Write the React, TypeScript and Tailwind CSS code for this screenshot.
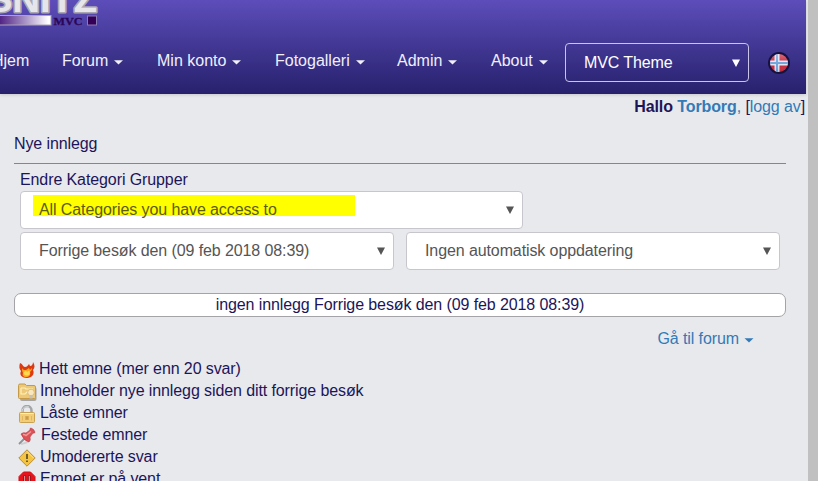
import React from "react";

function Caret({ className = "" }: { className?: string }) {
  return (
    <svg className={className} width="9" height="5" viewBox="0 0 9 5" fill="currentColor">
      <path d="M0 0.3h9L4.5 4.6z" />
    </svg>
  );
}

function Logo() {
  return (
    <svg className="block" width="104" height="30" viewBox="0 0 104 30">
      <defs>
        <linearGradient id="silver" x1="0" y1="0" x2="0" y2="1">
          <stop offset="0" stopColor="#d8d8dc" />
          <stop offset="0.6" stopColor="#f0f0f0" />
          <stop offset="1" stopColor="#c4c4c8" />
        </linearGradient>
        <linearGradient id="bar" x1="0" x2="1">
          <stop offset="0" stopColor="#4b1a80" />
          <stop offset="0.5" stopColor="#a58fc4" />
          <stop offset="0.95" stopColor="#ffffff" />
        </linearGradient>
      </defs>
      <g fontFamily="Liberation Sans, sans-serif" fontWeight="700" fontSize="36" stroke="#a9a6b4" strokeWidth="3.2" strokeLinejoin="round" fill="#e6e6ea" style={{ paintOrder: "stroke" }}>
        <text x="-13" y="11.500" textLength="110" lengthAdjust="spacingAndGlyphs">SNITZ</text>
      </g>
      <rect x="-2" y="15.5" width="53" height="9.5" fill="url(#bar)" stroke="#aaa4b8" />
      <text x="53.500" y="24.5" fontFamily="Liberation Serif, serif" fontWeight="700" fontSize="11" textLength="29" lengthAdjust="spacingAndGlyphs" fill="#2b0759" stroke="#2b0759" strokeWidth="0.3">MVC</text>
      <rect x="87.5" y="16" width="9" height="9" fill="#330055" stroke="#8a7ab8" />
    </svg>
  );
}

function Flag() {
  return (
    <svg width="24" height="24" viewBox="0 0 24 24">
      <defs>
        <clipPath id="round"><circle cx="12" cy="12" r="9" /></clipPath>
        <linearGradient id="shine" x1="0" y1="0" x2="0" y2="1">
          <stop offset="0" stopColor="#fff" stopOpacity="0.4" />
          <stop offset="0.55" stopColor="#fff" stopOpacity="0" />
          <stop offset="1" stopColor="#000" stopOpacity="0.2" />
        </linearGradient>
      </defs>
      <circle cx="12" cy="12" r="11" fill="#15123f" />
      <g clipPath="url(#round)">
        <path fill="#c8283c" d="M0 0h24v24H0z" />
        <path fill="#dfe4f4" d="M7.500 0h5v24h-5zM0 9.500h24v5H0z" />
        <path fill="#6fa5dc" d="M9 0h2v24H9zM0 11h24v2H0z" />
        <path fill="url(#shine)" d="M0 0h24v24H0z" />
      </g>
    </svg>
  );
}

const nav = [
  { text: "Hjem", width: "w-[70px]", caret: false },
  { text: "Forum", width: "w-[95px]", caret: true },
  { text: "Min konto", width: "w-[118px]", caret: true },
  { text: "Fotogalleri", width: "w-[122px]", caret: true },
  { text: "Admin", width: "w-[94px]", caret: true },
  { text: "About", width: "w-[74px]", caret: true },
];

function Triangle() {
  return (
    <svg width="8" height="8" viewBox="0 0 8 8" fill="currentColor">
      <path d="M0 0.500h8L4 8z" />
    </svg>
  );
}

function Select({ className, text, highlight = false }: { className: string; text: string; highlight?: boolean }) {
  return (
    <div className={`flex h-[38px] items-center justify-between rounded-[4px] border border-[#c6c6cc] bg-white pr-2 text-[#555] ${className}`}>
      <span className={highlight ? "-mt-[9px] ml-3 h-[21px] w-[322px] bg-[#ffff00] pl-[6px] pt-[5px] leading-[20px] text-[#5c5c14]" : "ml-[18px]"}>{text}</span>
      <Triangle />
    </div>
  );
}

function Fire() {
  return (
    <svg width="18" height="18" viewBox="0 0 18 18">
      <path d="M2 2c3 1 3 4 5 4 2 0 3-2 4-3l1 2c2 0 3-2 3-4 2 3 2 6 0 8 2 4-1 8-6 8-5 0-8-3-6-7C1 8 1 5 2 2z" fill="#dc3a12" />
      <path d="M4 7c1 2 2 2 4 2l3-2 1 2 2-2c0 2-1 3-2 4 1 3-1 5-4 5s-4-2-3-4C4 10 4 9 4 7z" fill="#ffa51f" />
      <path d="M6 11l2-1.500 1 1.500 2-1.500c2 3 0 5-2 5-3 0-4-2-3-3.500z" fill="#ffd94e" />
    </svg>
  );
}

function Folder() {
  return (
    <svg width="19" height="18" viewBox="0 0 19 18">
      <rect x="2" y="4" width="16.500" height="14" rx="2" fill="#a6a6a6" />
      <path d="M.5 2.500q0-1.500 1.500-1.500h5l1.500 1.500H16q1.500 0 1.500 1.500v10.500q0 1-1 1h-15q-1 0-1-1z" fill="#edc878" stroke="#c49a48" />
      <path d="M3 5h4l1 1h7M3 5v6h4l2-2h2" fill="none" stroke="#fff2b8" strokeWidth="1.200" />
      <circle cx="13" cy="9.500" r="3.300" fill="#f8e8c0" stroke="#d3ae63" strokeWidth=".7" />
      <path d="M11.500 13h3v2.500h-3z" fill="#c4c1bd" />
    </svg>
  );
}

function Lock() {
  return (
    <svg width="18" height="18" viewBox="0 0 18 18">
      <path d="M4.500 9V5.500a4.500 4.500 0 0 1 9 0V9" fill="none" stroke="#a3a5a8" strokeWidth="2.500" />
      <path d="M4 7V6a5 5 0 0 1 7-4" fill="none" stroke="#d8dadc" />
      <rect x="1.500" y="7.500" width="15" height="10" rx="1" fill="#f3cd78" stroke="#c9a152" />
      <path d="M2.500 8.500h13" stroke="#fff0bd" />
      <path d="M4.500 11v4.500M13.500 11v4.500" stroke="#e2b763" />
      <path d="M7 11h4v4H7z" fill="#dcaf5a" />
      <path d="M8.500 11.500h1v3h-1z" fill="#b98a3d" />
    </svg>
  );
}

function Pin() {
  return (
    <svg width="18" height="18" viewBox="0 0 18 18">
      <path d="M3 17q6-1 9-4" fill="none" stroke="#d0d0d4" strokeWidth="2" />
      <path d="M1 17l6-6" stroke="#909298" strokeWidth="1.800" />
      <path d="M3 7q2-2 5-1l4-3q-.5-2 1-2 3 1 4 4 0 1.500-2 1l-3 4q1 3-1 5Q6 14 3 7z" fill="#dc5357" stroke="#b93a44" strokeWidth=".6" />
      <path d="M5 7.500q2 0 3 1l5-4" fill="none" stroke="#f19b99" strokeWidth="1.500" />
    </svg>
  );
}

function Warning() {
  return (
    <svg width="18" height="18" viewBox="0 0 18 18">
      <path d="M9 .8L17.200 9 9 17.200.8 9z" fill="#f5c443" stroke="#b98f3a" strokeLinejoin="round" />
      <path d="M9 2.500L15.500 9" stroke="#ffe59b" />
      <path d="M9 5v5M9 11.500v1.600" stroke="#3b3320" strokeWidth="1.400" />
    </svg>
  );
}

function Pause() {
  return (
    <svg width="18" height="18" viewBox="0 0 18 18">
      <path d="M5.500 1h7L17 5.500v7L12.500 17h-7L1 12.500v-7z" fill="#e8141c" stroke="#d01018" />
      <path d="M6.700 4.500v9M11.300 4.500v9" stroke="#8b1018" strokeWidth="2.800" />
      <path d="M6.700 5v8M11.300 5v8" stroke="#e8a8a8" strokeWidth="1" />
    </svg>
  );
}

const legend = [
  { icon: <Fire />, text: "Hett emne (mer enn 20 svar)", gap: "gap-[3px]" },
  { icon: <Folder />, text: "Inneholder nye innlegg siden ditt forrige besøk", gap: "gap-[3px]" },
  { icon: <Lock />, text: "Låste emner", gap: "gap-1" },
  { icon: <Pin />, text: "Festede emner", gap: "gap-[5px]" },
  { icon: <Warning />, text: "Umodererte svar", gap: "gap-1" },
  { icon: <Pause />, text: "Emnet er på vent", gap: "gap-1" },
];

export default function App() {
  return (
    <div className="flex h-[481px] w-[818px] overflow-hidden whitespace-nowrap bg-[#c0c0c0] font-['Liberation_Sans',Arial,sans-serif] text-[16px] leading-[22px] text-[#1c1559]">
      <main className="h-[481px] w-[808px] shrink-0 overflow-hidden bg-[#e8e9ed] tracking-[-0.1px]">
        <header className="h-[94px] w-[806px] overflow-hidden bg-linear-to-b from-[#5d4dba] to-[#27216d] tracking-normal text-[#f0effa] shadow-[0_1px_3px_rgba(0,0,0,0.15)]">
          <Logo />
          <div className="-ml-2 mt-[13px] flex h-[39px] items-center">
            {nav.map((item) => (
              <div key={item.text} className={`-mt-[3px] flex shrink-0 items-center gap-[6px] ${item.width}`}>
                <span>{item.text}</span>
                {item.caret && <Caret className="mt-[3px]" />}
              </div>
            ))}
            <div className="flex h-[39px] w-[184px] shrink-0 items-center justify-between rounded-[4px] border border-[#c9c5e8] pl-[18px] pr-2 text-white">
              <span className="tracking-[-0.1px]">MVC Theme</span>
              <Triangle />
            </div>
            <div className="ml-[18px]"><Flag /></div>
          </div>
        </header>
        <div className="mr-[3px] mt-[2px] text-right">
          <b>Hallo <span className="text-[#337ab7]">Torborg</span></b>
          <span className="text-[#337ab7]">, </span>[<span className="text-[#337ab7]">logg av</span>]
        </div>
        <section className="ml-[14px] w-[772px]">
          <h1 className="mt-[15px] h-[31px] border-b border-[#85858f]">Nye innlegg</h1>
          <div className="pl-[6px] pr-[6px] pt-[5px]">
            <p>Endre Kategori Grupper</p>
            <Select className="w-[503px]" text="All Categories you have access to" highlight />
            <div className="mt-[3px] flex gap-3">
              <Select className="w-[374px]" text="Forrige besøk den (09 feb 2018 08:39)" />
              <Select className="w-[374px]" text="Ingen automatisk oppdatering" />
            </div>
          </div>
          <div className="mt-[23px] h-[24px] rounded-[7px] border border-[#a4a4a8] bg-white text-center">
            ingen innlegg Forrige besøk den (09 feb 2018 08:39)
          </div>
          <div className="mt-[11px] flex items-center justify-end gap-[5px] pr-[32px] text-[#337ab7]">
            <span>Gå til forum</span>
            <Caret className="mt-[3px] w-[10px]" />
          </div>
          <ul className="ml-1 mt-[8px]">
            {legend.map((row) => (
              <li key={row.text} className={`flex h-[22px] items-center ${row.gap}`}>
                <span className="mt-[2px] shrink-0">{row.icon}</span>
                <span>{row.text}</span>
              </li>
            ))}
          </ul>
        </section>
      </main>
    </div>
  );
}
